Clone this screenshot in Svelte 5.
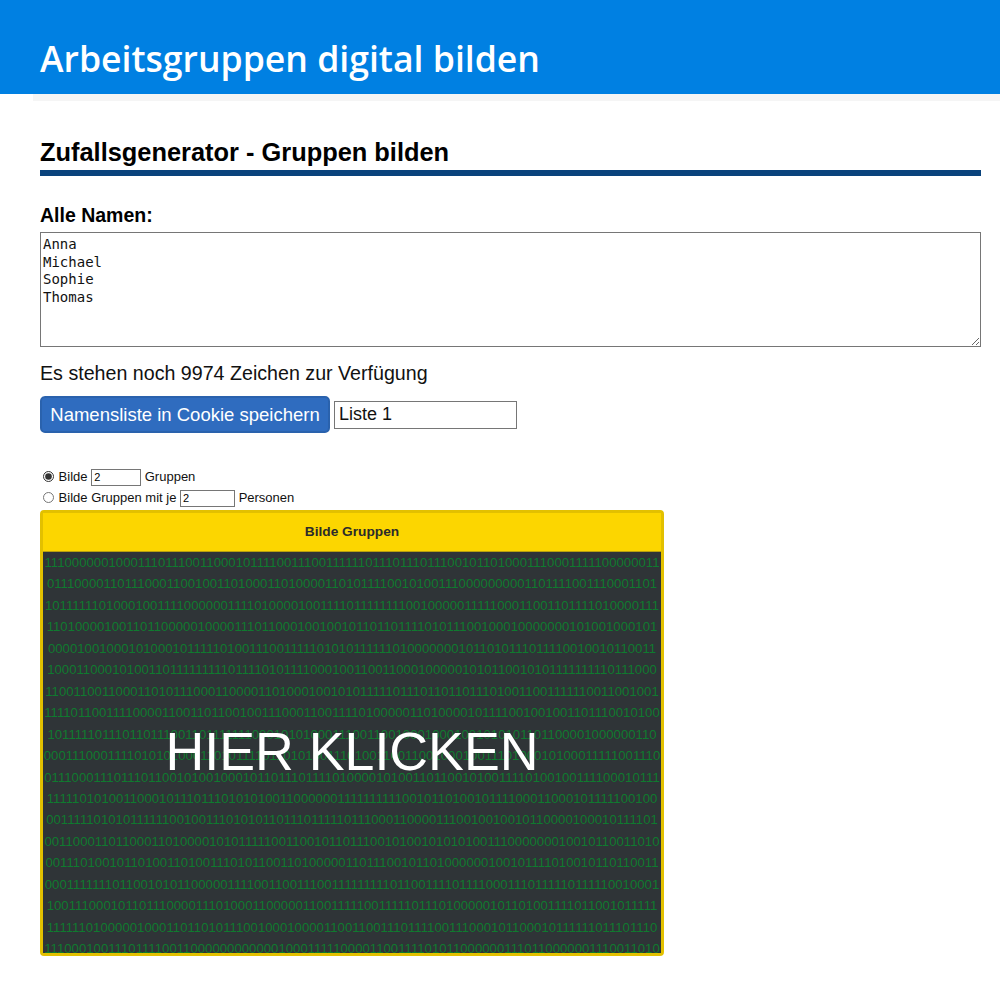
<script lang="ts">
    let names = $state("Anna\nMichael\nSophie\nThomas");
    let listName = $state("Liste 1");
    let mode = $state("count");

    const maxChars = 10000;
    const remaining = 9974;

    // the matrix rows, each centred in the box
    const binaryRows = [
        "1110000001000111011100110001011110011100111111011101110111001011010001110001111100000011",
        "01110000110111000110010011010001101000011010111100101001110000000001101111001110001101",
        "1011111101000100111100000011110100001001111011111111001000001111100011001101111010000111",
        "1101000010011011000001000011101100010010010110110111101011100100010000000101001000101",
        "00001001000101000101111101001110011111010101111110100000001011010111011110010010110011",
        "100011000101001101111111110111101011110001001100110001000001010110010101111111110111000",
        "110011001100011010111000110000110100010010101111101110110110111010011001111110011001001",
        "111101100111100001100110110010011100011001111010000011010000101111001001001101110010100",
        "10111110111011011100110111111100010101000111001100100010001001010101101100001000000110",
        "000111000111101010100011010111101101010011101001100110010001001110100010100011111001110",
        "011100011101110110010100100010110111011110100001010011011001010011110100100111100010111",
        "111110101001100010111011101010100110000001111111111001011010010111100011000101111100100",
        "001111101010111111001001110101011011101111101110001100001110010010010110000100010111101",
        "00110001101100011010000101011111001100101101110010100101010100111000000010010110011010",
        "00111010010110100110100111010110011010000011011100101101000000100101111010010110110011",
        "00011111110110010101100000111100110011100111111111011001111011110001110111110111110010001",
        "100111000101101110000111010001100000110011111001111101110100000101101001111011001011111",
        "111111010000010001101101011100100010000110011001110111100111000101100010111111011101110",
        "111000100111011110011000000000000100011111000011001111010110000001110110000001110011010"
    ];
</script>

<header class="banner">
    <h1>Arbeitsgruppen digital bilden</h1>
</header>
<div class="strip"></div>

<main class="content">
    <h2>Zufallsgenerator - Gruppen bilden</h2>

    <label class="names-label" for="names">Alle Namen:</label>
    <textarea id="names" class="names" spellcheck="false" maxlength={maxChars} bind:value={names}></textarea>

    <p class="remaining">Es stehen noch {remaining} Zeichen zur Verfügung</p>

    <div class="save-row">
        <button class="save">Namensliste in Cookie speichern</button>
        <input class="list-name" type="text" bind:value={listName} />
    </div>

    <div class="options">
        <label class="option">
            <input type="radio" name="mode" value="count" bind:group={mode} />
            Bilde <input class="num" type="text" value="2" /> Gruppen
        </label>
        <label class="option">
            <input type="radio" name="mode" value="size" bind:group={mode} />
            Bilde Gruppen mit je <input class="num num-size" type="text" value="2" /> Personen
        </label>
    </div>

    <section class="generator">
        <div class="generator-head">Bilde Gruppen</div>
        <div class="matrix">
            {#each binaryRows as row}
                <div class="matrix-row">{row}</div>
            {/each}
            <div class="click-hint">HIER KLICKEN</div>
        </div>
    </section>
</main>

<style>
    :global(body) {
        font-family: "Liberation Sans", Arial, sans-serif;
        background: #fff;
        color: #111;
    }

    .banner {
        height: 94px;
        background: #0080e2;
        display: flex;
        align-items: center;
        padding: 0 40px;
    }

    .banner h1 {
        margin: 0;
        color: #fff;
        font-family: "Open Sans", sans-serif;
        font-size: 35.6px;
        font-weight: 600;
        position: relative;
        top: 11px;
        line-height: 46px;
        height: 46px;
    }

    .strip {
        height: 7px;
        margin-left: 33px;
        background: #f5f5f5;
    }

    .content {
        padding: 0 19px 0 40px;
    }

    h2 {
        margin: 0;
        padding-top: 36px;
        padding-bottom: 3px;
        font-size: 25.4px;
        line-height: 30px;
        font-weight: 700;
        color: #000;
        border-bottom: 6px solid #0a437c;
    }

    .names-label {
        display: block;
        margin-top: 28px;
        font-size: 19.5px;
        line-height: 22px;
        font-weight: 700;
        color: #000;
    }

    .names {
        display: block;
        box-sizing: border-box;
        width: 100%;
        height: 115px;
        margin-top: 6px;
        padding: 3px 2px;
        border: 1px solid #767676;
        font-family: "DejaVu Sans Mono", monospace;
        font-size: 14px;
        line-height: 17.5px;
        color: #111;
        outline: none;
    }

    .remaining {
        margin: 14px 0 0;
        font-size: 19.65px;
        line-height: 24px;
    }

    .save-row {
        display: flex;
        align-items: center;
        gap: 4px;
        margin-top: 11px;
    }

    .save {
        box-sizing: border-box;
        width: 290px;
        height: 37px;
        padding: 0;
        border: 2px solid #2a62ad;
        border-radius: 5px;
        background: #2f6cbf;
        color: #fff;
        font-family: inherit;
        font-size: 18.5px;
    }

    .list-name {
        box-sizing: border-box;
        width: 183px;
        height: 28px;
        padding: 0 4px;
        border: 1px solid #767676;
        font-family: inherit;
        font-size: 18px;
        color: #111;
    }

    .options {
        margin-top: 33px;
        font-size: 13px;
    }

    .option {
        display: block;
        height: 21px;
        line-height: 21px;
        white-space: nowrap;
    }

    .option input[type="radio"] {
        width: 11px;
        height: 11px;
        margin: 0 1px 0 3px;
        vertical-align: -1px;
        accent-color: #333;
    }

    .num {
        box-sizing: border-box;
        width: 50px;
        height: 17px;
        margin: 0;
        padding: 0 2px;
        border: 1px solid #767676;
        font-family: inherit;
        font-size: 11px;
        vertical-align: 0;
    }

    .num-size {
        width: 55px;
    }

    .generator {
        box-sizing: border-box;
        width: 624px;
        height: 446px;
        margin-top: 2px;
        border: 3px solid #e2c000;
        border-radius: 4px;
        display: flex;
        flex-direction: column;
    }

    .generator-head {
        box-sizing: border-box;
        height: 38px;
        flex: none;
        display: flex;
        align-items: center;
        justify-content: center;
        padding-bottom: 2px;
        background: #fcd600;
        font-size: 13.7px;
        font-weight: 700;
        color: #2b2b2b;
    }

    .matrix {
        position: relative;
        flex: 1;
        overflow: hidden;
        background: #2f3437;
        border-top: 1px solid #b8a00f;
        color: #0f7a2f;
        font-size: 13.2px;
        line-height: 21.45px;
        text-align: center;
    }

    .matrix-row {
        white-space: nowrap;
    }

    .click-hint {
        position: absolute;
        top: 168px;
        left: 0;
        right: 0;
        color: #fff;
        font-size: 53.7px;
        line-height: 62px;
        text-align: center;
    }
</style>
